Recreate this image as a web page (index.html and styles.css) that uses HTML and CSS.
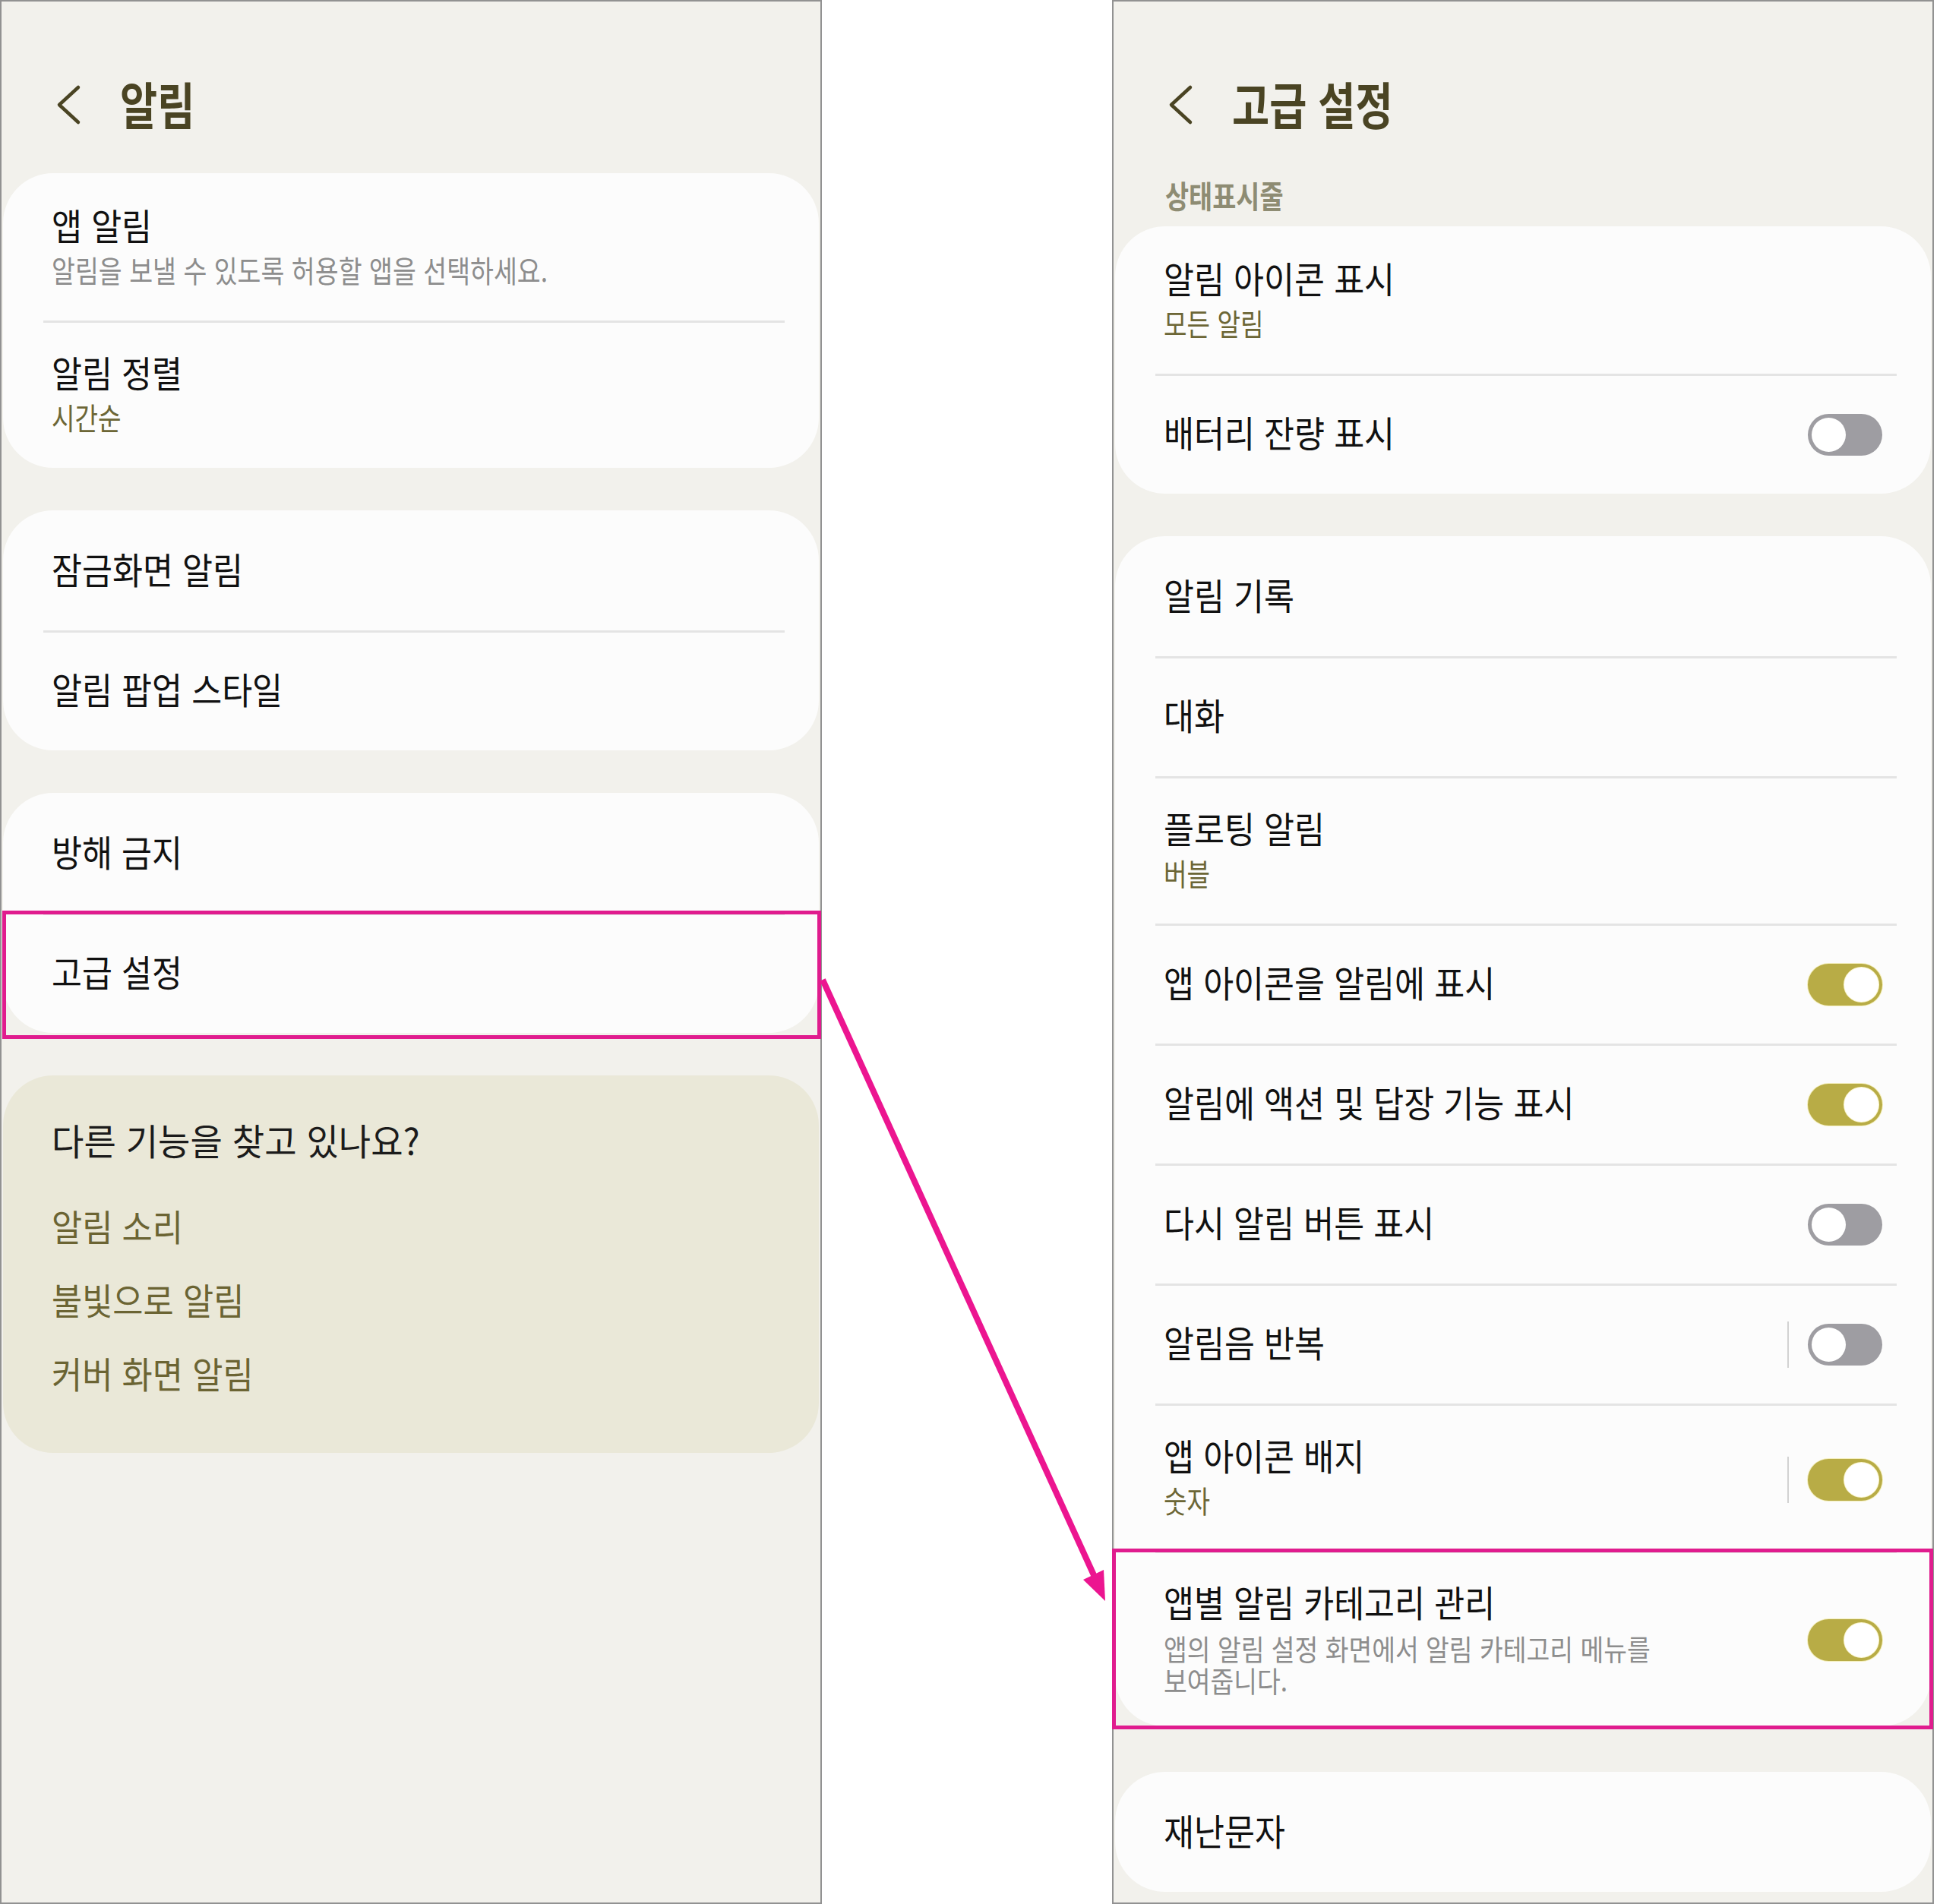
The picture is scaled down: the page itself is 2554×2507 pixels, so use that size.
FILE: index.html
```html
<!DOCTYPE html>
<html lang="ko">
<head>
    <meta charset="UTF-8">
    <meta name="viewport" content="width=device-width, initial-scale=1.0">
    <title>알림 설정</title>
    <link rel="stylesheet" href="styles.css">
</head>
<body>

<div class="sheet">

    <!-- 알림 -->
    <section class="screen">
        <header class="topbar">
            <svg class="back" viewBox="0 0 34 56"><polyline points="30,5 5,28 30,51"/></svg>
            <h1>알림</h1>
        </header>

        <div class="card">
            <div class="row tall">
                <div class="text">
                    <p class="name">앱 알림</p>
                    <p class="sub">알림을 보낼 수 있도록 허용할 앱을 선택하세요.</p>
                </div>
            </div>
            <hr>
            <div class="row tall">
                <div class="text">
                    <p class="name">알림 정렬</p>
                    <p class="value">시간순</p>
                </div>
            </div>
        </div>

        <div class="card">
            <div class="row"><p class="name">잠금화면 알림</p></div>
            <hr>
            <div class="row"><p class="name">알림 팝업 스타일</p></div>
        </div>

        <div class="card">
            <div class="row"><p class="name">방해 금지</p></div>
            <hr>
            <div class="row mark left-mark"><p class="name">고급 설정</p></div>
        </div>

        <div class="card more">
            <p class="ask">다른 기능을 찾고 있나요?</p>
            <p class="link">알림 소리</p>
            <p class="link">불빛으로 알림</p>
            <p class="link">커버 화면 알림</p>
        </div>
    </section>

    <!-- 고급 설정 -->
    <section class="screen">
        <header class="topbar">
            <svg class="back" viewBox="0 0 34 56"><polyline points="30,5 5,28 30,51"/></svg>
            <h1>고급 설정</h1>
        </header>

        <p class="label">상태표시줄</p>

        <div class="card">
            <div class="row tall">
                <div class="text">
                    <p class="name">알림 아이콘 표시</p>
                    <p class="value">모든 알림</p>
                </div>
            </div>
            <hr>
            <div class="row">
                <div class="text"><p class="name">배터리 잔량 표시</p></div>
                <span class="switch"></span>
            </div>
        </div>

        <div class="card">
            <div class="row"><p class="name">알림 기록</p></div>
            <hr>
            <div class="row"><p class="name">대화</p></div>
            <hr>
            <div class="row tall">
                <div class="text">
                    <p class="name">플로팅 알림</p>
                    <p class="value">버블</p>
                </div>
            </div>
            <hr>
            <div class="row">
                <div class="text"><p class="name">앱 아이콘을 알림에 표시</p></div>
                <span class="switch on"></span>
            </div>
            <hr>
            <div class="row">
                <div class="text"><p class="name">알림에 액션 및 답장 기능 표시</p></div>
                <span class="switch on"></span>
            </div>
            <hr>
            <div class="row">
                <div class="text"><p class="name">다시 알림 버튼 표시</p></div>
                <span class="switch"></span>
            </div>
            <hr>
            <div class="row">
                <div class="text"><p class="name">알림음 반복</p></div>
                <span class="split"></span>
                <span class="switch"></span>
            </div>
            <hr>
            <div class="row tall">
                <div class="text">
                    <p class="name">앱 아이콘 배지</p>
                    <p class="value">숫자</p>
                </div>
                <span class="split"></span>
                <span class="switch on"></span>
            </div>
            <hr>
            <div class="row desc mark right-mark">
                <div class="text">
                    <p class="name">앱별 알림 카테고리 관리</p>
                    <p class="note">앱의 알림 설정 화면에서 알림 카테고리 메뉴를<br>보여줍니다.</p>
                </div>
                <span class="switch on"></span>
            </div>
        </div>

        <div class="card last">
            <div class="row"><p class="name">재난문자</p></div>
        </div>
    </section>

    <!-- 고급 설정 행에서 오른쪽 화면으로 이어지는 화살표 -->
    <svg class="arrow" viewBox="0 0 2554 2507">
        <line x1="1083" y1="1290" x2="1440" y2="2074"/>
        <polygon points="1455,2108 1453,2067 1426,2080"/>
    </svg>

</div>

</body>
</html>
```

FILE: styles.css
```css
body {
    margin: 0;
    background: #fff;
    font-family: "Noto Sans CJK KR", "Noto Sans", sans-serif;
}
p {
    margin: 0;
}
.sheet {
    position: relative;
    display: flex;
    gap: 382px;
    width: 2554px;
    height: 2507px;
}
.screen {
    width: 1082px;
    height: 2507px;
    box-sizing: border-box;
    border: 2px solid #929292;
    background: #f2f1ec;
    padding: 0 2px;
}

/* top bar */
.topbar {
    height: 226px;
    box-sizing: border-box;
    padding-top: 46px;
    display: flex;
    align-items: center;
}
.back {
    width: 34px;
    height: 56px;
    margin-left: 69px;
    margin-right: 51px;
}
.back polyline {
    fill: none;
    stroke: #4a4423;
    stroke-width: 4.5;
    stroke-linecap: round;
    stroke-linejoin: round;
}
.topbar h1 {
    margin: 0;
    font-size: 66px;
    font-weight: 700;
    line-height: 1;
    color: #4a4423;
    transform: translateY(-3px) scaleX(.81);
    transform-origin: 0 50%;
}
.label {
    height: 70px;
    box-sizing: border-box;
    padding: 3px 0 0 66px;
    font-size: 41px;
    line-height: 50px;
    font-weight: 700;
    color: #8e8c73;
    transform: scaleX(.825);
    transform-origin: 66px 50%;
}

/* cards */
.card {
    background: #fcfcfc;
    border-radius: 66px;
    padding-top: 3px;
}
.card + .card {
    margin-top: 56px;
}
.card.last {
    margin-top: 60px;
}
.card hr {
    margin: 0 45px 0 53px;
    border: none;
    height: 3px;
    background: #e4e4e4;
}
.row {
    display: flex;
    align-items: center;
    min-height: 155px;
    box-sizing: border-box;
    padding: 0 64px;
}
.row.tall {
    padding-top: 39px;
    padding-bottom: 36px;
}
.row.desc {
    padding-top: 38px;
    padding-bottom: 38px;
}
.text {
    flex: 1;
}
.name {
    font-size: 48px;
    line-height: 60px;
    color: #111;
    transform: translateY(-5px) scaleX(.905);
    transform-origin: 0 50%;
}
.sub {
    font-size: 40px;
    line-height: 56px;
    color: #8d8d8d;
    transform: translateY(-3px) scaleX(.84);
    transform-origin: 0 50%;
}
.value {
    font-size: 40px;
    line-height: 56px;
    color: #6c6636;
    transform: translateY(-3px) scaleX(.83);
    transform-origin: 0 50%;
}
.note {
    margin-top: 8px;
    font-size: 38px;
    line-height: 42px;
    color: #8d8d8d;
    transform: translateY(-2px) scaleX(.88);
    transform-origin: 0 50%;
}

/* switches */
.switch {
    flex-shrink: 0;
    display: flex;
    width: 98px;
    height: 55px;
    box-sizing: border-box;
    padding: 5px;
    border-radius: 28px;
    background: #9e9da2;
}
.switch::before {
    content: "";
    width: 45px;
    height: 45px;
    border-radius: 50%;
    background: #fff;
}
.switch.on {
    justify-content: flex-end;
    background: #b8ac46;
    box-shadow: 0 0 0 1px #f4efbd;
}
.switch.on::before {
    box-shadow: 0 0 0 1px #fbf6cf;
}
.split {
    flex-shrink: 0;
    width: 2px;
    height: 61px;
    margin-right: 25px;
    background: #d2d2d2;
}

/* search suggestions */
.card.more {
    background: #eae8d8;
    padding: 54px 64px 76px;
}
.ask {
    font-size: 48px;
    line-height: 60px;
    color: #1b1b1b;
    transform: scaleX(.96);
    transform-origin: 0 50%;
}
.link {
    margin-top: 37px;
    font-size: 48px;
    line-height: 60px;
    color: #6b6433;
    transform: scaleX(.91);
    transform-origin: 0 50%;
}
.ask + .link {
    margin-top: 53px;
}

/* highlight boxes and arrow */
.mark {
    position: relative;
}
.mark::after {
    content: "";
    position: absolute;
    border: 5px solid #e01c8e;
}
.left-mark::after {
    top: -6px;
    bottom: -8px;
    left: -1px;
    right: -3px;
}
.right-mark::after {
    top: -6px;
    bottom: -4px;
    left: -4px;
    right: -3px;
}
.arrow {
    position: absolute;
    left: 0;
    top: 0;
    width: 2554px;
    height: 2507px;
    pointer-events: none;
}
.arrow line {
    stroke: #ec1590;
    stroke-width: 8;
}
.arrow polygon {
    fill: #ec1590;
}
```
